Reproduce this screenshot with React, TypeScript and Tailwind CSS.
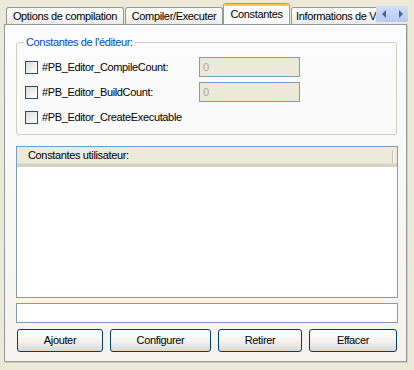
import React from 'react';

const tabBase =
  'h-[17px] flex items-center justify-center pt-[1px] border border-b-0 border-[#919B9C] rounded-t-[3px] bg-linear-to-b from-white to-[#ECEBE6] whitespace-nowrap overflow-hidden';

const Checkbox: React.FC = () => (
  <span className="w-[13px] h-[13px] shrink-0 border border-[#1C5180] bg-linear-to-br from-[#DCDCD7] to-white" />
);

const EditorRow: React.FC<{ label: string; value?: string }> = ({ label, value }) => (
  <div className="flex items-center h-[20px]">
    <div className="flex items-center w-[174px]">
      <Checkbox />
      <span className="ml-[4px]">{label}</span>
    </div>
    {value !== undefined && (
      <div className="w-[101px] h-[20px] border border-[#7F9DB9] bg-[#ECE9D8] text-[#ACA899] pl-[3px] flex items-center">
        {value}
      </div>
    )}
  </div>
);

const XpButton: React.FC<{ label: string; width: string }> = ({ label, width }) => (
  <button
    className={`${width} h-[23px] border border-[#003C74] rounded-[3px] bg-linear-to-b from-white via-[#F4F4F0] to-[#DCD8CE] flex items-center justify-center tracking-[-0.35px]`}
  >
    {label}
  </button>
);

export default function App() {
  return (
    <div className="w-[414px] h-[370px] bg-[#ECE9D8] pt-[3px] pl-[4px] font-['Liberation_Sans',Arial,sans-serif] text-[11px] leading-[13px] tracking-[-0.35px] text-black">
      {/* tab strip */}
      <div className="relative z-10 flex items-start h-[21px] w-[404px]">
        <div className="flex items-end h-[21px] w-[372px] overflow-hidden pl-[2px]">
          <div className={`${tabBase} w-[118px] shrink-0`}>Options de compilation</div>
          <div className={`${tabBase} w-[98px] ml-[1px] shrink-0`}>Compiler/Executer</div>
          <div className="w-[67px] h-[22px] -mb-[1px] shrink-0 flex flex-col border-x border-[#919B9C] rounded-t-[3px] bg-[#FCFCFE] overflow-hidden">
            <div className="h-[1px] bg-[#E68B2C]" />
            <div className="h-[2px] bg-[#FFC73C]" />
            <div className="flex-1 flex items-center justify-center pb-[2px] whitespace-nowrap">Constantes</div>
          </div>
          <div className={`${tabBase} w-[120px] ml-[1px] shrink-0 justify-start pl-[4px]`}>Informations de Version</div>
        </div>
        <div className="mt-[3px] h-[16px] w-[32px] flex bg-linear-to-b from-[#D3DEFA] to-[#B7C9F5]">
          <div className="w-[16px] h-[16px] flex items-center justify-center">
            <svg width="5" height="8" viewBox="0 0 5 8"><path d="M4 0v8L0 4z" fill="#4D6185" /></svg>
          </div>
          <div className="w-[16px] h-[16px] flex items-center justify-center">
            <svg width="5" height="8" viewBox="0 0 5 8"><path d="M1 0v8l4-4z" fill="#4D6185" /></svg>
          </div>
        </div>
      </div>

      {/* tab panel */}
      <div className="w-[403px] h-[338px] border border-[#919B9C] bg-linear-to-b from-[#FCFCFE] to-[#F4F3EE] shadow-[1px_1px_0_#D0CEBF] flex flex-col">
        <fieldset className="mt-[10px] ml-[11px] w-[381px] border border-[#D0D0BF] rounded-[3px] p-0">
          <legend className="ml-[7px] px-[2px] leading-[14px] text-[#0046D5]">Constantes de l'éditeur:</legend>
          <div className="flex flex-col gap-[5px] pl-[8px] pt-[8px] pb-[7px]">
            <EditorRow label="#PB_Editor_CompileCount:" value="0" />
            <EditorRow label="#PB_Editor_BuildCount:" value="0" />
            <EditorRow label="#PB_Editor_CreateExecutable" />
          </div>
        </fieldset>

        <div className="mt-[11px] ml-[11px] w-[382px] h-[152px] border border-[#7F9DB9] bg-white">
          <div className="h-[20px] bg-[#EBEADB] border-b-[3px] border-[#D6D2C2] shadow-[inset_0_-1px_0_#E2DECD] flex items-center pl-[11px] relative">
            Constantes utilisateur:
            <span className="absolute right-[3px] top-[3px] h-[13px] w-[2px] border-l border-[#C7C5B2] border-r border-r-white" />
          </div>
        </div>

        <div className="mt-[5px] ml-[11px] w-[382px] h-[20px] border border-[#7F9DB9] bg-white" />

        <div className="mt-[6px] ml-[12px] flex gap-[7px]">
          <XpButton label="Ajouter" width="w-[86px]" />
          <XpButton label="Configurer" width="w-[101px]" />
          <XpButton label="Retirer" width="w-[84px]" />
          <XpButton label="Effacer" width="w-[88px]" />
        </div>
      </div>
    </div>
  );
}
